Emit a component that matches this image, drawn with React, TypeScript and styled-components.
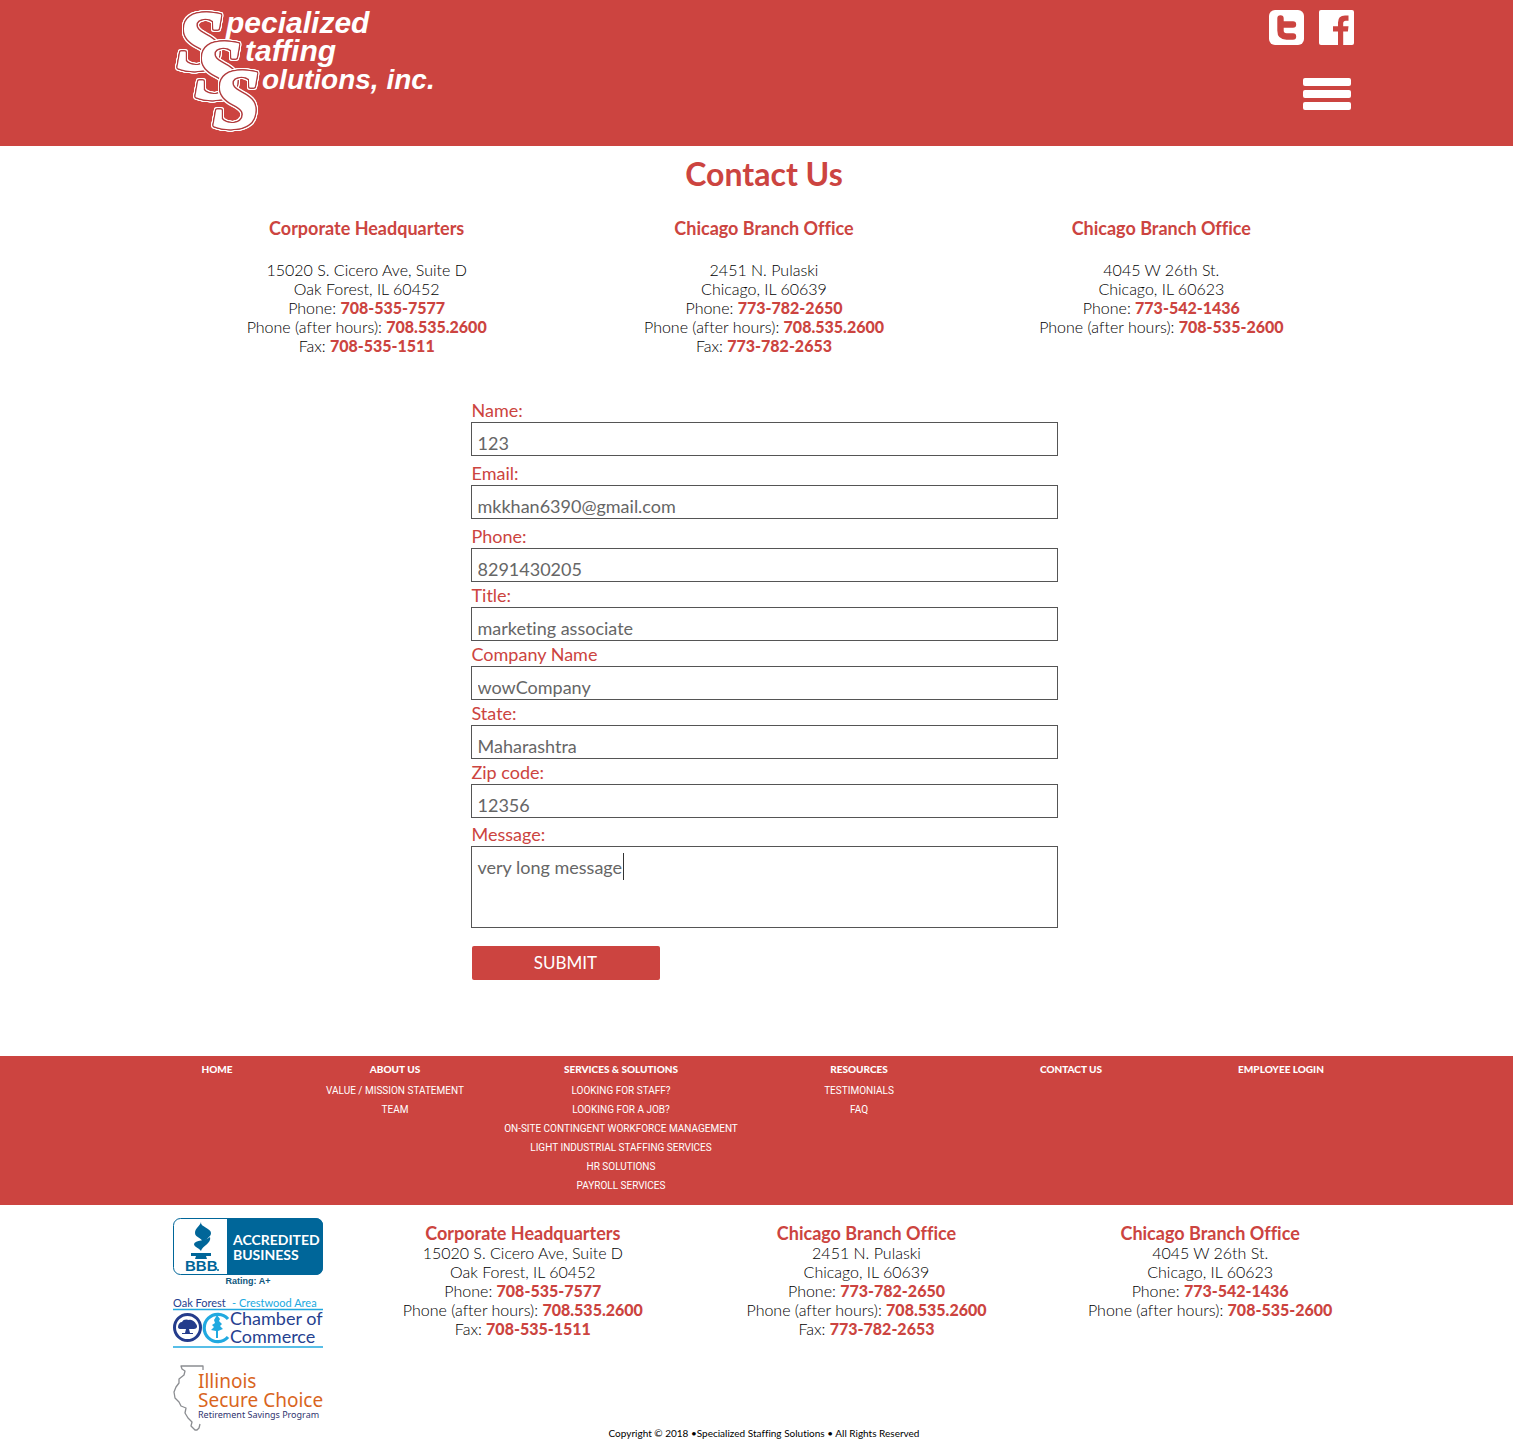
import React from "react";
import styled, { createGlobalStyle } from "styled-components";

const red = "#cc4440";
const sans = `Lato, "Open Sans", "Liberation Sans", sans-serif`;

const GlobalStyle = createGlobalStyle`
  *, *::before, *::after { box-sizing: border-box; }
  body {
    margin: 0;
    background: #fff;
    color: #000;
    font-family: ${sans};
    font-size: 16px;
    font-variant-ligatures: none;
    line-height: 19px;
  }
  h1, h2, p, ul { margin: 0; padding: 0; }
  ul { list-style: none; }
  a { color: inherit; text-decoration: none; }
`;

const Band = styled.div<{ $red?: boolean }>`
  padding-left: 15px;
  background: ${(p) => (p.$red ? red : "#fff")};
`;

const Container = styled.div`
  max-width: 1192px;
  margin: 0 auto;
`;

const HeaderRow = styled(Container)`
  display: flex;
  justify-content: space-between;
  align-items: flex-start;
  min-height: 146px;
  padding: 10px 6px 12px;
`;

const LogoLink = styled.a`
  display: block;
  line-height: 0;
`;

const HeaderTools = styled.div`
  display: flex;
  flex-direction: column;
  align-items: flex-end;
  gap: 33px;
`;

const SocialLinks = styled.div`
  display: flex;
  gap: 15px;
  line-height: 0;
`;

const MenuButton = styled.button`
  display: flex;
  flex-direction: column;
  gap: 4px;
  margin-right: 3px;
  padding: 0;
  border: 0;
  background: none;
  cursor: pointer;
`;

const MenuBar = styled.span`
  width: 48px;
  height: 8px;
  border-radius: 2px;
  background: #fff;
`;

const PageTitle = styled.h1`
  padding-top: 8px;
  color: ${red};
  font-size: 32px;
  line-height: 40px;
  font-weight: 700;
  text-align: center;
`;

const OfficeGrid = styled.div`
  display: grid;
  grid-template-columns: repeat(3, 1fr);
  flex: 1;
`;

const MainOffices = styled(OfficeGrid)`
  padding-top: 24px;
`;

const OfficeCard = styled.section<{ $spaced?: boolean }>`
  text-align: center;
  font-weight: 300;

  h2 {
    margin-bottom: ${(p) => (p.$spaced ? "22px" : "0")};
    color: ${red};
    font-size: 18px;
    line-height: 20px;
    font-weight: 700;
  }
`;

const PhoneLink = styled.a`
  color: ${red};
  font-weight: 900;
`;

const ContactForm = styled.form`
  max-width: 587px;
  margin: 47px auto 0;
  padding-bottom: 76px;
`;

const Field = styled.div<{ $gap: number }>`
  margin-bottom: ${(p) => p.$gap}px;

  label {
    display: block;
    padding: 0 0 4px 1px;
    color: ${red};
    font-size: 18px;
    line-height: 16px;
  }
`;

const TextInput = styled.input`
  display: block;
  width: 100%;
  height: 34px;
  padding: 8px 6px 0;
  border: 1px solid #555;
  border-radius: 0;
  outline: 0;
  color: #666;
  font: 400 18px/24px ${sans};
  font-variant-ligatures: none;
`;

const MessageBox = styled.div`
  position: relative;
`;

const MessageArea = styled.textarea`
  display: block;
  width: 100%;
  height: 82px;
  padding: 8px 6px;
  border: 1px solid #555;
  border-radius: 0;
  outline: 0;
  resize: none;
  color: #666;
  font: 400 18px/24px ${sans};
  font-variant-ligatures: none;
`;

const Caret = styled.span`
  position: absolute;
  top: 7px;
  left: 152px;
  width: 1px;
  height: 27px;
  background: #333;
`;

const SubmitButton = styled.button`
  display: block;
  width: 188px;
  height: 34px;
  margin-left: 1px;
  padding: 0;
  border: 0;
  border-radius: 2px;
  background: ${red};
  color: #fff;
  font: 400 17px/34px ${sans};
`;

const SiteNav = styled.nav`
  display: grid;
  grid-template-columns: 146fr 210fr 242fr 234fr 190fr 230fr;
  max-width: 1252px;
  min-height: 149px;
  margin: 0 auto;
  padding-top: 4px;
  color: #fff;
  font-size: 10px;
  line-height: 19px;
  text-align: center;
  text-transform: uppercase;
  white-space: nowrap;

  ul { font-family: Roboto, ${sans}; }
`;

const NavBand = styled(Band)`
  padding-left: 27px;
`;

const NavHeading = styled.a`
  display: block;
  margin-bottom: 2px;
  font-weight: 900;
`;

const FooterRow = styled(Container)`
  display: flex;
  align-items: flex-start;
  padding-top: 13px;
`;

const Badges = styled.div`
  display: flex;
  flex-direction: column;
  width: 183px;
  padding-left: 5px;
  line-height: 0;
`;

const BadgeLink = styled.a<{ $gap?: number }>`
  display: block;
  width: 150px;
  margin-bottom: ${(p) => p.$gap ?? 0}px;
`;

const Rating = styled.p`
  width: 150px;
  margin-bottom: 10px;
  color: #10577c;
  font: 700 9px/12px "Liberation Sans", Arial, sans-serif;
  text-align: center;
`;

const FooterOffices = styled(OfficeGrid)`
  margin: 5px -22px 0 0;
`;

const Copyright = styled.p`
  margin-top: -4px;
  padding-bottom: 9px;
  font-size: 10px;
  line-height: 12px;
  text-align: center;
`;

const LogoInitial = styled.text`
  font: italic 700 84px "Liberation Serif", "Times New Roman", serif;
  fill: #fff;
  stroke: #fff;
  stroke-width: 2px;
  stroke-linejoin: round;
  filter: drop-shadow(1px 0 0 #b03a3c) drop-shadow(-1px 0 0 #b03a3c) drop-shadow(0 1px 0 #b03a3c)
    drop-shadow(0 -1px 0 #b03a3c) drop-shadow(1px 0 0 #fff) drop-shadow(-1px 0 0 #fff)
    drop-shadow(0 1px 0 #fff) drop-shadow(0 -1px 0 #fff);
`;

const LogoWord = styled.text<{ $size: number }>`
  font: italic 700 ${(p) => p.$size}px "Liberation Sans", Arial, sans-serif;
  fill: #fff;
`;

function Logo() {
  return (
    <svg width="262" height="124" viewBox="174 9 262 124" overflow="visible" role="img" aria-label="Specialized Staffing Solutions, inc.">
      <LogoInitial x="177" y="69">S</LogoInitial>
      <LogoInitial x="195" y="98">S</LogoInitial>
      <LogoInitial x="213" y="127">S</LogoInitial>
      <LogoWord $size={30} x="226" y="32">pecialized</LogoWord>
      <LogoWord $size={30} x="245" y="60">taffing</LogoWord>
      <LogoWord $size={28} x="262" y="88">olutions, inc.</LogoWord>
    </svg>
  );
}

function TwitterIcon() {
  return (
    <svg width="35" height="35" viewBox="0 0 35 35" aria-hidden="true">
      <rect width="35" height="35" rx="6" fill="#fff" />
      <path d="M11.500 8.500V20.500Q11.500 26.500 17.500 26.500H24M11.500 14.500H24" fill="none" stroke={red} strokeWidth="6.400" strokeLinecap="round" />
    </svg>
  );
}

function FacebookIcon() {
  return (
    <svg width="35" height="35" viewBox="0 0 35 35" aria-hidden="true">
      <rect width="35" height="35" rx="2" fill="#fff" />
      <path d="M19 35V21.500H14V16.200H19V12.500Q19 5.500 26 5.500H29.500V10.700H26.800Q24.200 10.700 24.200 13.200V16.200H29.500L28.900 21.500H24.200V35Z" fill={red} />
    </svg>
  );
}

function BbbBadge() {
  return (
    <svg width="150" height="57" viewBox="0 0 150 57" role="img" aria-label="BBB accredited business">
      <rect x="0.500" y="0.500" width="149" height="56" rx="7" fill="#fff" stroke="#006699" />
      <path d="M54 0H142Q150 0 150 8V49Q150 57 142 57H54Z" fill="#006699" />
      <path d="M28 4C27 9 38 10 38 15C38 19 33 21 29 25C31 20 22 20 22 15C22 10 27 8 28 4Z" fill="#006699" />
      <path d="M37 19C39 25 29 28 28 33C26 30 21 29 21 26C22 22 33 23 37 19Z" fill="#006699" />
      <path d="M18 35H38V38H33L34 41H22L23 38H18Z" fill="#006699" />
      <text x="12" y="53" fill="#006699" fontFamily={`"Liberation Sans", Arial, sans-serif`} fontWeight="700" fontSize="15">BBB</text>
      <circle cx="45" cy="52" r="1" fill="#006699" />
      <g fill="#fff" fontFamily={sans} fontWeight="700" fontSize="14">
        <text x="60" y="27">ACCREDITED</text>
        <text x="60" y="42">BUSINESS</text>
      </g>
    </svg>
  );
}

function ChamberBadge() {
  return (
    <svg width="150" height="52" viewBox="0 0 150 52" overflow="visible" role="img" aria-label="Oak Forest - Crestwood Area Chamber of Commerce">
      <g fontFamily={sans} fontSize="11">
        <text x="0" y="10" fill="#26418f">Oak Forest</text>
        <text x="59" y="10" fill="#20a9e0">- Crestwood Area</text>
      </g>
      <path d="M0 12.500H150M0 50H150" stroke="#20a9e0" strokeWidth="1.600" />
      <circle cx="14.500" cy="30.500" r="13" fill="none" stroke="#243c8c" strokeWidth="3" />
      <path d="M5 30C5 27 7 25 9 25C10 22 14 22 16 23C19 22 22 25 23 27C25 29 24 32 21 32H16L17 36H20V37H9V36H12L13 32H8Q5 32 5 30Z" fill="#243c8c" />
      <path d="M55 22A13.600 13.600 0 1 0 55 40" fill="none" stroke="#20a9e0" strokeWidth="3.200" />
      <path d="M44 18L47 22L46 24L49 27L47 29L50 32L45 34V41H43V34L38 33L41 30L39 28L42 26L41 23Z" fill="#20a9e0" />
      <g fontFamily={sans} fontSize="18" fill="#26418f">
        <text x="57" y="28">Chamber of</text>
        <text x="57" y="46">Commerce</text>
      </g>
    </svg>
  );
}

function SecureChoiceBadge() {
  return (
    <svg width="150" height="67" viewBox="0 0 150 67" overflow="visible" role="img" aria-label="Illinois Secure Choice Retirement Savings Program">
      <path d="M30 6V2H8L9 5L12 7L11 11L6 15L6 19L3 23L1 28L2 34L6 38L8 42L13 44L12 49L15 54L19 58L18 62L22 66L24 66L26 64L27 60" fill="none" stroke="#8b8d91" strokeWidth="1.300" strokeLinejoin="round" />
      <g fontFamily={`"Noto Sans", "Open Sans", sans-serif`}>
        <g fill="#d9651d" fontSize="19">
          <text x="25" y="24">Illinois</text>
          <text x="25" y="43">Secure Choice</text>
        </g>
        <text x="25" y="54" fill="#30346f" fontSize="9">Retirement Savings Program</text>
      </g>
    </svg>
  );
}

type Office = { name: string; street: string; city: string; lines: [string, string][] };

const offices: Office[] = [
  {
    name: "Corporate Headquarters",
    street: "15020 S. Cicero Ave, Suite D",
    city: "Oak Forest, IL 60452",
    lines: [["Phone", "708-535-7577"], ["Phone (after hours)", "708.535.2600"], ["Fax", "708-535-1511"]],
  },
  {
    name: "Chicago Branch Office",
    street: "2451 N. Pulaski",
    city: "Chicago, IL 60639",
    lines: [["Phone", "773-782-2650"], ["Phone (after hours)", "708.535.2600"], ["Fax", "773-782-2653"]],
  },
  {
    name: "Chicago Branch Office",
    street: "4045 W 26th St.",
    city: "Chicago, IL 60623",
    lines: [["Phone", "773-542-1436"], ["Phone (after hours)", "708-535-2600"]],
  },
];

function OfficeList({ spaced }: { spaced?: boolean }) {
  return (
    <>
      {offices.map((office) => (
        <OfficeCard key={office.street} $spaced={spaced}>
          <h2>{office.name}</h2>
          <p>{office.street}</p>
          <p>{office.city}</p>
          {office.lines.map(([label, number]) => (
            <p key={label}>
              {label}: <PhoneLink href={`tel:${number}`}>{number}</PhoneLink>
            </p>
          ))}
        </OfficeCard>
      ))}
    </>
  );
}

const fields = [
  { id: "name", label: "Name:", value: "123", gap: 9 },
  { id: "email", label: "Email:", value: "mkkhan6390@gmail.com", gap: 9 },
  { id: "phone", label: "Phone:", value: "8291430205", gap: 5 },
  { id: "title", label: "Title:", value: "marketing associate", gap: 5 },
  { id: "company", label: "Company Name", value: "wowCompany", gap: 5 },
  { id: "state", label: "State:", value: "Maharashtra", gap: 5 },
  { id: "zip", label: "Zip code:", value: "12356", gap: 8 },
];

const navGroups = [
  { title: "Home", links: [] },
  { title: "About Us", links: ["Value / Mission Statement", "Team"] },
  {
    title: "Services & Solutions",
    links: [
      "Looking for Staff?",
      "Looking for a Job?",
      "On-Site Contingent Workforce Management",
      "Light Industrial Staffing Services",
      "HR Solutions",
      "Payroll Services",
    ],
  },
  { title: "Resources", links: ["Testimonials", "FAQ"] },
  { title: "Contact Us", links: [] },
  { title: "Employee Login", links: [] },
];

export default function App() {
  return (
    <>
      <GlobalStyle />
      <Band as="header" $red>
        <HeaderRow>
          <LogoLink href="#home"><Logo /></LogoLink>
          <HeaderTools>
            <SocialLinks>
              <a href="#twitter" aria-label="Twitter"><TwitterIcon /></a>
              <a href="#facebook" aria-label="Facebook"><FacebookIcon /></a>
            </SocialLinks>
            <MenuButton type="button" aria-label="Menu">
              <MenuBar /><MenuBar /><MenuBar />
            </MenuButton>
          </HeaderTools>
        </HeaderRow>
      </Band>

      <Band as="main">
        <Container>
          <PageTitle>Contact Us</PageTitle>
          <MainOffices><OfficeList spaced /></MainOffices>
          <ContactForm onSubmit={(e) => e.preventDefault()}>
            {fields.map((f) => (
              <Field key={f.id} $gap={f.gap}>
                <label htmlFor={f.id}>{f.label}</label>
                <TextInput id={f.id} name={f.id} type="text" defaultValue={f.value} />
              </Field>
            ))}
            <Field $gap={18}>
              <label htmlFor="message">Message:</label>
              <MessageBox>
                <MessageArea id="message" name="message" defaultValue="very long message" />
                <Caret />
              </MessageBox>
            </Field>
            <SubmitButton type="submit">SUBMIT</SubmitButton>
          </ContactForm>
        </Container>
      </Band>

      <footer>
        <NavBand $red>
          <SiteNav>
            {navGroups.map((group) => (
              <div key={group.title}>
                <NavHeading href="#nav">{group.title}</NavHeading>
                <ul>
                  {group.links.map((link) => (
                    <li key={link}><a href="#nav">{link}</a></li>
                  ))}
                </ul>
              </div>
            ))}
          </SiteNav>
        </NavBand>
        <Band>
          <FooterRow>
            <Badges>
              <BadgeLink href="#bbb"><BbbBadge /></BadgeLink>
              <Rating>Rating: A+</Rating>
              <BadgeLink href="#chamber" $gap={15}><ChamberBadge /></BadgeLink>
              <BadgeLink href="#secure-choice"><SecureChoiceBadge /></BadgeLink>
            </Badges>
            <FooterOffices><OfficeList /></FooterOffices>
          </FooterRow>
          <Copyright>Copyright © 2018 •Specialized Staffing Solutions • All Rights Reserved</Copyright>
        </Band>
      </footer>
    </>
  );
}
